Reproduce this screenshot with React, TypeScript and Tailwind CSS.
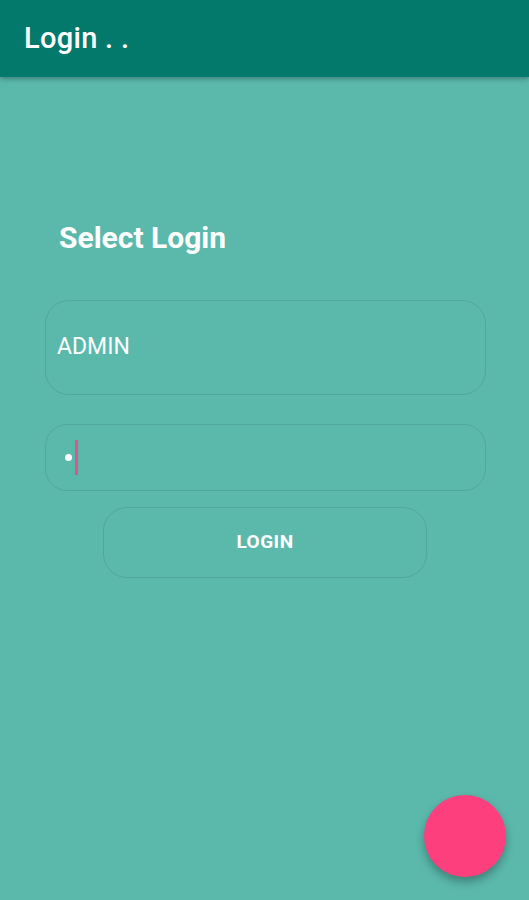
export default function App() {
  return (
    <div
      className="relative flex h-[900px] w-[529px] flex-col overflow-hidden bg-[#5bb9ac]"
      style={{ fontFamily: "Roboto, 'Noto Sans', sans-serif" }}
    >
      {/* app bar */}
      <header className="z-10 flex h-[77px] shrink-0 items-center bg-[#02796b] px-6 shadow-[0_2px_5px_rgba(0,0,0,0.3)]">
        <h1 className="text-[29px] font-medium tracking-[0.3px] text-white">Login . .</h1>
      </header>

      <main className="flex flex-col px-[45px] pt-[141px]">
        <h2 className="pl-[14px] text-[30px] font-bold leading-[40px] text-white">Select Login</h2>

        <div className="mt-[42px] flex h-[95px] w-[441px] items-center rounded-[24px] border border-black/10 pl-[11px]">
          <span className="text-[23px] text-white">ADMIN</span>
        </div>

        <div className="mt-[29px] flex h-[67px] w-[441px] items-center rounded-[22px] border border-black/10 pl-[19px]">
          <span className="h-[7px] w-[7px] rounded-full bg-white" />
          <span className="ml-[3px] h-[35px] w-[3px] bg-[#e2558a]" />
        </div>

        <button
          type="button"
          className="ml-[58px] mt-4 flex h-[71px] w-[324px] items-center justify-center rounded-[24px] border border-black/10 text-[19px] font-bold tracking-wide text-white"
        >
          LOGIN
        </button>
      </main>

      <button
        type="button"
        aria-label="action"
        className="absolute left-[424px] top-[795px] h-[82px] w-[82px] rounded-full bg-[#fd3f7d] shadow-[0_5px_10px_rgba(0,0,0,0.3)]"
      />
    </div>
  )
}
